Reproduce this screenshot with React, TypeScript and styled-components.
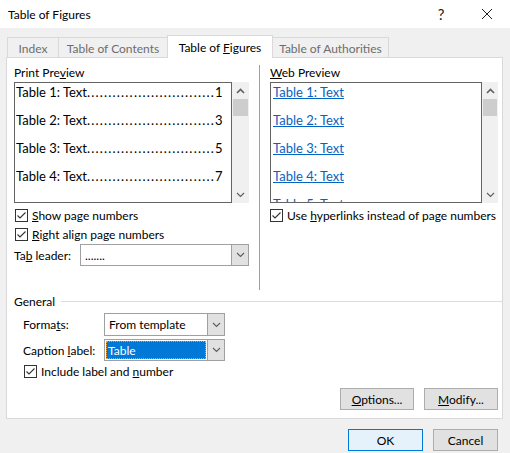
import React from 'react';
import styled, { createGlobalStyle } from 'styled-components';

const GlobalStyle = createGlobalStyle`
  html, body {
    margin: 0;
    padding: 0;
    background: #f0f0f0;
  }
  * {
    box-sizing: border-box;
  }
`;

const Window = styled.div`
  width: 510px;
  height: 453px;
  background: #f0f0f0;
  display: flex;
  flex-direction: column;
  font-family: Lato, 'Liberation Sans', sans-serif;
  font-size: 12px;
  color: #000;
  overflow: hidden;
`;

const TitleBar = styled.div`
  height: 28px;
  background: #fff;
  display: flex;
  align-items: center;
  padding-left: 8px;
`;

const Title = styled.div`
  flex: 1;
  font-size: 12px;
`;

const TitleButton = styled.div`
  width: 46px;
  height: 28px;
  display: flex;
  align-items: center;
  justify-content: center;
  font-size: 15px;
  color: #222;
`;

const TabRow = styled.div`
  display: flex;
  align-items: flex-end;
  height: 22px;
  margin-top: 7px;
  padding-left: 7px;
  position: relative;
  z-index: 1;
`;

const Tab = styled.div<{ $w: number; $active?: boolean }>`
  width: ${(p) => p.$w}px;
  height: ${(p) => (p.$active ? 23 : 20)}px;
  margin-bottom: ${(p) => (p.$active ? -1 : 0)}px;
  margin-left: -1px;
  border: 1px solid #d9d9d9;
  border-bottom: none;
  background: ${(p) => (p.$active ? '#fff' : '#f0f0f0')};
  color: ${(p) => (p.$active ? '#000' : '#6d6d6d')};
  display: flex;
  align-items: center;
  justify-content: center;
  padding-top: ${(p) => (p.$active ? 0 : 1)}px;
  white-space: nowrap;
  &:first-child {
    margin-left: 0;
  }
`;

const Panel = styled.div`
  margin-left: 6px;
  width: 497px;
  height: 362px;
  background: #fff;
  border: 1px solid #d9d9d9;
  padding: 7px 4px 0 7px;
  display: flex;
  flex-direction: column;
`;

const TopSection = styled.div`
  display: flex;
  height: 225px;
`;

const Column = styled.div<{ $w: number }>`
  width: ${(p) => p.$w}px;
  display: flex;
  flex-direction: column;
`;

const VDivider = styled.div`
  width: 1px;
  background: #a0a0a0;
  margin: 0 10px;
`;

const SectionLabel = styled.div`
  height: 16px;
  line-height: 16px;
`;

const PreviewWrap = styled.div`
  margin-top: 1px;
  height: 121px;
  display: flex;
`;

const ListBox = styled.div<{ $w: number }>`
  width: ${(p) => p.$w}px;
  height: 100%;
  border: 1px solid #646464;
  overflow: hidden;
  padding: 0 1px;
  font-size: 13px;
`;

const PrintRow = styled.div`
  height: 28px;
  line-height: 18px;
  white-space: nowrap;
`;

const Leader = styled.span`
  letter-spacing: 1.2px;
`;

const LinkRow = styled.div`
  height: 28px;
  line-height: 18px;
  padding-left: 1px;
  color: #0563c1;
  text-decoration: underline;
  white-space: nowrap;
`;

const ScrollTrack = styled.div<{ $w: number }>`
  width: ${(p) => p.$w}px;
  background: #f0f0f0;
  display: flex;
  flex-direction: column;
`;

const ScrollButton = styled.div`
  height: 17px;
  display: flex;
  align-items: center;
  justify-content: center;
`;

const Thumb = styled.div`
  height: 17px;
  margin: 0 1px;
  background: #cdcdcd;
`;

const ScrollSpacer = styled.div`
  flex: 1;
`;

const CheckRow = styled.label<{ $mt: number; $indent?: number }>`
  display: flex;
  align-items: center;
  height: 13px;
  margin-top: ${(p) => p.$mt}px;
  margin-left: ${(p) => p.$indent || 0}px;
  gap: 4px;
  white-space: nowrap;
`;

const Box = styled.span`
  width: 13px;
  height: 13px;
  border: 1px solid #333;
  background: #fff;
  display: flex;
  align-items: center;
  justify-content: center;
`;

const FieldRow = styled.div<{ $mt: number; $indent?: number }>`
  display: flex;
  align-items: center;
  margin-top: ${(p) => p.$mt}px;
  margin-left: ${(p) => p.$indent || 0}px;
`;

const FieldLabel = styled.div<{ $w: number }>`
  width: ${(p) => p.$w}px;
`;

const Combo = styled.div<{ $w: number; $h: number }>`
  width: ${(p) => p.$w}px;
  height: ${(p) => p.$h}px;
  border: 1px solid #a0a0a0;
  background: #fff;
  display: flex;
`;

const ComboText = styled.div`
  flex: 1;
  display: flex;
  align-items: center;
  padding-left: 4px;
`;

const Selection = styled.div`
  flex: 1;
  margin: 1px;
  background: #0078d7;
  color: #fff;
  border: 1px dotted #e8a040;
  display: flex;
  align-items: center;
  padding-left: 1px;
`;

const ComboButton = styled.div`
  width: 17px;
  background: #e1e1e1;
  border-left: 1px solid #a0a0a0;
  display: flex;
  align-items: center;
  justify-content: center;
`;

const GeneralHeader = styled.div`
  display: flex;
  align-items: center;
  height: 16px;
  margin-top: 3px;
  gap: 6px;
`;

const HLine = styled.div`
  flex: 1;
  height: 1px;
  background: #dcdcdc;
  margin-right: -4px;
`;

const ButtonRow = styled.div<{ $mt: number; $pr: number }>`
  display: flex;
  justify-content: flex-end;
  gap: 10px;
  margin-top: ${(p) => p.$mt}px;
  padding-right: ${(p) => p.$pr}px;
`;

const Button = styled.button<{ $w: number; $default?: boolean }>`
  width: ${(p) => p.$w}px;
  height: 22px;
  font-family: Lato, 'Liberation Sans', sans-serif;
  font-size: 12px;
  color: #000;
  padding: 0;
  background: ${(p) => (p.$default ? '#e5f1fb' : '#e1e1e1')};
  border: 1px solid ${(p) => (p.$default ? '#0078d7' : '#adadad')};
`;

const Check = () => (
  <Box>
    <svg width="11" height="11" viewBox="0 0 11 11">
      <path d="M1.5 5.5 L4 8 L9.5 2.5" fill="none" stroke="#333" strokeWidth="1.1" />
    </svg>
  </Box>
);

const Chevron = ({ up }: { up?: boolean }) => (
  <svg width="9" height="6" viewBox="0 0 9 6">
    <path
      d={up ? 'M1 5 L4.5 1.5 L8 5' : 'M1 1 L4.5 4.5 L8 1'}
      fill="none"
      stroke="#606060"
      strokeWidth={up ? 1.6 : 1.2}
    />
  </svg>
);

const Scrollbar = ({ w }: { w: number }) => (
  <ScrollTrack $w={w}>
    <ScrollButton>
      <Chevron up />
    </ScrollButton>
    <Thumb />
    <ScrollSpacer />
    <ScrollButton>
      <Chevron />
    </ScrollButton>
  </ScrollTrack>
);

const printEntries = [
  { label: 'Table 1: Text', page: 1 },
  { label: 'Table 2: Text', page: 3 },
  { label: 'Table 3: Text', page: 5 },
  { label: 'Table 4: Text', page: 7 },
];

const webEntries = ['Table 1: Text', 'Table 2: Text', 'Table 3: Text', 'Table 4: Text', 'Table 5: Text'];

const DOTS = '.'.repeat(30);

export default function App() {
  return (
    <Window>
      <GlobalStyle />
      <TitleBar>
        <Title>Table of Figures</Title>
        <TitleButton>?</TitleButton>
        <TitleButton>
          <svg width="12" height="12" viewBox="0 0 12 12">
            <path d="M1 1 L11 11 M11 1 L1 11" stroke="#222" strokeWidth="1" />
          </svg>
        </TitleButton>
      </TitleBar>

      <TabRow>
        <Tab $w={52}>Index</Tab>
        <Tab $w={110}>Table of Contents</Tab>
        <Tab $w={106} $active>
          <span>
            Table of <u>F</u>igures
          </span>
        </Tab>
        <Tab $w={117}>Table of Authorities</Tab>
      </TabRow>

      <Panel>
        <TopSection>
          <Column $w={235}>
            <SectionLabel>
              Print Pre<u>v</u>iew
            </SectionLabel>
            <PreviewWrap>
              <ListBox $w={218}>
                {printEntries.map((e) => (
                  <PrintRow key={e.label}>
                    {e.label}
                    <Leader>{DOTS}</Leader>
                    {e.page}
                  </PrintRow>
                ))}
              </ListBox>
              <Scrollbar w={17} />
            </PreviewWrap>
            <CheckRow $mt={6} $indent={1}>
              <Check />
              <span>
                <u>S</u>how page numbers
              </span>
            </CheckRow>
            <CheckRow $mt={6} $indent={1}>
              <Check />
              <span>
                <u>R</u>ight align page numbers
              </span>
            </CheckRow>
            <FieldRow $mt={3}>
              <FieldLabel $w={66}>
                Ta<u>b</u> leader:
              </FieldLabel>
              <Combo $w={169} $h={22}>
                <ComboText>.......</ComboText>
                <ComboButton>
                  <Chevron />
                </ComboButton>
              </Combo>
            </FieldRow>
          </Column>

          <VDivider />

          <Column $w={228}>
            <SectionLabel>
              <u>W</u>eb Preview
            </SectionLabel>
            <PreviewWrap>
              <ListBox $w={212}>
                {webEntries.map((e) => (
                  <LinkRow key={e}>{e}</LinkRow>
                ))}
              </ListBox>
              <Scrollbar w={16} />
            </PreviewWrap>
            <CheckRow $mt={6}>
              <Check />
              <span>
                Use <u>h</u>yperlinks instead of page numbers
              </span>
            </CheckRow>
          </Column>
        </TopSection>

        <GeneralHeader>
          <span>General</span>
          <HLine />
        </GeneralHeader>
        <FieldRow $mt={4} $indent={9}>
          <FieldLabel $w={81}>
            Forma<u>t</u>s:
          </FieldLabel>
          <Combo $w={121} $h={23}>
            <ComboText>From template</ComboText>
            <ComboButton>
              <Chevron />
            </ComboButton>
          </Combo>
        </FieldRow>
        <FieldRow $mt={3} $indent={9}>
          <FieldLabel $w={81}>
            Caption <u>l</u>abel:
          </FieldLabel>
          <Combo $w={121} $h={22}>
            <Selection>Table</Selection>
            <ComboButton>
              <Chevron />
            </ComboButton>
          </Combo>
        </FieldRow>
        <CheckRow $mt={4} $indent={10}>
          <Check />
          <span>
            Include label and <u>n</u>umber
          </span>
        </CheckRow>
        <ButtonRow $mt={10} $pr={0}>
          <Button $w={74}>
            <u>O</u>ptions...
          </Button>
          <Button $w={74}>
            <u>M</u>odify...
          </Button>
        </ButtonRow>
      </Panel>

      <ButtonRow $mt={10} $pr={12}>
        <Button $w={75} $default>
          OK
        </Button>
        <Button $w={65}>Cancel</Button>
      </ButtonRow>
    </Window>
  );
}
